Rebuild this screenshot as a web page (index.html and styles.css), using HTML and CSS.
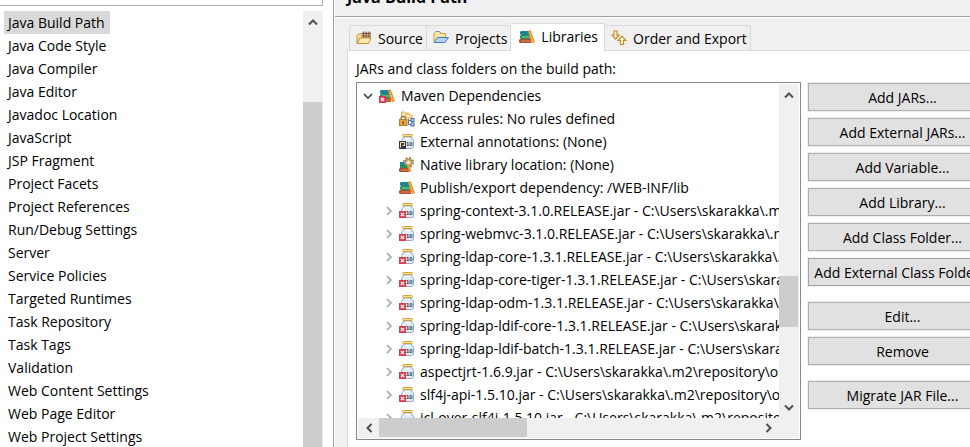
FILE: index.html
```
<!DOCTYPE html>
<html lang="en">
<head>
    <meta charset="UTF-8">
    <meta name="viewport" content="width=device-width, initial-scale=1.0">
    <title>Java Build Path</title>
    <link rel="stylesheet" href="styles.css">
</head>
<body>
    <!-- Icon definitions -->
    <svg class="defs" aria-hidden="true">
        <symbol id="up" viewBox="0 0 10 10"><path d="M1 7.5 L5 3.5 L9 7.5" fill="none" stroke="#505050" stroke-width="2"/></symbol>
        <symbol id="down" viewBox="0 0 10 10"><path d="M1 2.5 L5 6.5 L9 2.5" fill="none" stroke="#505050" stroke-width="2"/></symbol>
        <symbol id="left" viewBox="0 0 10 10"><path d="M7.5 1 L3.5 5 L7.5 9" fill="none" stroke="#505050" stroke-width="2"/></symbol>
        <symbol id="right" viewBox="0 0 10 10"><path d="M2.5 1 L6.5 5 L2.5 9" fill="none" stroke="#505050" stroke-width="2"/></symbol>
        <symbol id="open" viewBox="0 0 10 10"><path d="M1 3 L5 7 L9 3" fill="none" stroke="#404040" stroke-width="1.6"/></symbol>
        <symbol id="closed" viewBox="0 0 10 10"><path d="M3 1 L7 5 L3 9" fill="none" stroke="#a6a6a6" stroke-width="1.6"/></symbol>
        <symbol id="error" viewBox="0 0 7 7">
            <rect width="7" height="7" fill="#d9394d"/>
            <path d="M1.8 1.8 L5.2 5.2 M5.2 1.8 L1.8 5.2" stroke="#fff" stroke-width="1.2"/>
        </symbol>
        <symbol id="books" viewBox="0 0 16 16">
            <path d="M1 3 l1 -1 h8 v4 h-8 l-1 -1z" fill="#1c8793"/>
            <path d="M2 6 h9 v4 h-9 l-1 -1 v-2z" fill="#2c8c5c"/>
            <path d="M3 8 h8" stroke="#8fd0a5" stroke-width="1"/>
            <path d="M1 10 h11 v4 h-11 l-1 -1 v-2z" fill="#b04f2b"/>
            <path d="M2 12 h10" stroke="#d99069" stroke-width="1"/>
            <path d="M9 2.5 L11.5 1 L16 13 L13 14.2z" fill="#e68f27"/>
            <path d="M10.5 3 L14.3 13" stroke="#f7bb59" stroke-width="1"/>
        </symbol>
        <symbol id="books-error" viewBox="0 0 16 16">
            <use href="#books"/>
            <use href="#error" x="0" y="8" width="7" height="7"/>
        </symbol>
        <symbol id="bottle" viewBox="0 0 16 16">
            <path d="M5 3 h7 l2.5 3.5 v6 q0 2 -2 2 h-8 q-2 0 -2 -2 v-6z" fill="#dfebf8" stroke="#93a6c2" stroke-width="1"/>
            <path d="M4.5 6.5 v2 M6 4.5 h5" stroke="#fff" stroke-width="1.4"/>
            <rect x="3.5" y=".5" width="10" height="2" rx="1" fill="#fae596" stroke="#cfa43a" stroke-width="1"/>
            <text x="7" y="11.5" class="bits">10</text>
        </symbol>
        <symbol id="jar" viewBox="0 0 16 16">
            <use href="#bottle"/>
            <use href="#error" x="0" y="8" width="7" height="7"/>
        </symbol>
        <symbol id="annotations" viewBox="0 0 16 16">
            <use href="#bottle"/>
            <rect x="0" y="7" width="7" height="8" fill="#35384a"/>
            <path d="M1.5 13.5 v-5 h4 v3 h-2" fill="none" stroke="#f5e6b0" stroke-width="1"/>
        </symbol>
        <symbol id="rules" viewBox="0 0 16 16">
            <path d="M2.5 1 h3 l1 1 h3 v4 h-7z" fill="#fbe3a0" stroke="#dcae55" stroke-width="1"/>
            <path d="M7 3 h3 l1 1 h2 v3 h-6z" fill="#fff0bd" stroke="#dcae55" stroke-width="1"/>
            <path d="M9.5 8 v5.5 h3 M9.5 9.5 h3" fill="none" stroke="#5274ad" stroke-width="1"/>
            <rect x="12" y="7.5" width="3" height="3" fill="#c9dbf4" stroke="#4469a8"/>
            <rect x="12" y="12" width="3" height="3" fill="#c9dbf4" stroke="#4469a8"/>
            <path d="M2 9 v-1.5 a2.2 2.2 0 0 1 4.4 0 v1.5" fill="none" stroke="#8d7449" stroke-width="1.3"/>
            <rect x=".5" y="8.5" width="7.5" height="6" fill="#e2a63e" stroke="#b67b28"/>
            <path d="M4.2 10.5 v2.5" stroke="#71440f" stroke-width="1.3"/>
        </symbol>
        <symbol id="native" viewBox="0 0 16 16">
            <circle cx="9.5" cy="5.5" r="4.7" fill="none" stroke="#9a7b48" stroke-width="1.6" stroke-dasharray="2 1.7"/>
            <circle cx="9.5" cy="5.5" r="3.2" fill="#ead9ae" stroke="#b3925a" stroke-width="1.8"/>
            <circle cx="9.5" cy="5.5" r="1.3" fill="#fff"/>
            <path d="M1 5 h4 l1 3 h-5z" fill="#1c8793"/>
            <path d="M1 8 h8 v3 h-8z" fill="#2c8c5c"/>
            <path d="M1 11 h9 v4 h-9 l-1 -1 v-2z" fill="#b04f2b"/>
            <path d="M2 13 h8" stroke="#d99069" stroke-width="1"/>
            <path d="M7.5 8 l2 -1 l3 7 l-2 1z" fill="#ee9a31"/>
        </symbol>
        <symbol id="source" viewBox="0 0 16 16">
            <path d="M1 13.5 v-8 l1.5 -1.5 h3 l1.5 1.5 h6 v3" fill="#f9dd95" stroke="#c7922f"/>
            <path d="M6 2 h9 v6 h-9z" fill="#e7c7a0"/>
            <path d="M5.5 3.5 h9.5 M5.5 6 h9.5 M7.5 1.5 v6.5 M10.2 1.5 v6.5 M13 1.5 v6.5" stroke="#735044" stroke-width="1"/>
            <path d="M1 13.5 l2.8 -5.5 h11.4 l-2.8 5.5z" fill="#fce9b1" stroke="#c7922f"/>
        </symbol>
        <symbol id="projects" viewBox="0 0 16 16">
            <path d="M1 12 v-8.5 l2 -2 h3.5 l1.5 2 h4.5 v4" fill="#fae6aa" stroke="#cba04a"/>
            <path d="M2.5 1.5 h4 l1.5 2" fill="none" stroke="#7198c8"/>
            <path d="M1 12.5 l3.5 -5 h11 l-3.5 5z" fill="#b5d3f5" stroke="#4876b9"/>
        </symbol>
        <symbol id="order" viewBox="0 0 16 16">
            <path d="M3 1 h3 v4 h2 l-3.5 4 l-3.5 -4 h2z" fill="#fff5d2" stroke="#bf8d2a" stroke-width="1.2"/>
            <path d="M9.5 14.5 h3 v-4 h2.5 l-4 -4.3 l-4 4.3 h2.5z" fill="#fff5d2" stroke="#bf8d2a" stroke-width="1.2"/>
        </symbol>
    </svg>

    <div class="dialog">
        <!-- Property pages -->
        <nav class="sidebar">
            <input type="text" class="filter" aria-label="Filter">
            <div class="page-area">
                <ul class="page-list">
                    <li><a href="#" class="selected">Java Build Path</a></li>
                    <li><a href="#">Java Code Style</a></li>
                    <li><a href="#">Java Compiler</a></li>
                    <li><a href="#">Java Editor</a></li>
                    <li><a href="#">Javadoc Location</a></li>
                    <li><a href="#">JavaScript</a></li>
                    <li><a href="#">JSP Fragment</a></li>
                    <li><a href="#">Project Facets</a></li>
                    <li><a href="#">Project References</a></li>
                    <li><a href="#">Run/Debug Settings</a></li>
                    <li><a href="#">Server</a></li>
                    <li><a href="#">Service Policies</a></li>
                    <li><a href="#">Targeted Runtimes</a></li>
                    <li><a href="#">Task Repository</a></li>
                    <li><a href="#">Task Tags</a></li>
                    <li><a href="#">Validation</a></li>
                    <li><a href="#">Web Content Settings</a></li>
                    <li><a href="#">Web Page Editor</a></li>
                    <li><a href="#">Web Project Settings</a></li>
                </ul>
                <div class="scroll vertical">
                    <button class="arrow" aria-label="Scroll up"><svg><use href="#up"/></svg></button>
                    <div class="track-before"></div>
                    <div class="thumb long"></div>
                </div>
            </div>
        </nav>

        <main class="content">
            <h1>Java Build Path</h1>

            <div class="tabs" role="tablist">
                <button class="tab" role="tab"><svg class="icon"><use href="#source"/></svg>Source</button>
                <button class="tab" role="tab"><svg class="icon"><use href="#projects"/></svg>Projects</button>
                <button class="tab active" role="tab" aria-selected="true"><svg class="icon"><use href="#books"/></svg>Libraries</button>
                <button class="tab" role="tab"><svg class="icon"><use href="#order"/></svg>Order and Export</button>
            </div>

            <div class="panel">
                <p class="caption">JARs and class folders on the build path:</p>
                <div class="columns">
                    <div class="tree">
                        <ul class="rows">
                            <li class="root"><svg class="twisty"><use href="#open"/></svg><svg class="icon"><use href="#books-error"/></svg>Maven Dependencies</li>
                            <li class="leaf"><svg class="icon"><use href="#rules"/></svg>Access rules: No rules defined</li>
                            <li class="leaf"><svg class="icon"><use href="#annotations"/></svg>External annotations: (None)</li>
                            <li class="leaf"><svg class="icon"><use href="#native"/></svg>Native library location: (None)</li>
                            <li class="leaf"><svg class="icon"><use href="#books"/></svg>Publish/export dependency: /WEB-INF/lib</li>
                            <li><svg class="twisty"><use href="#closed"/></svg><svg class="icon"><use href="#jar"/></svg>spring-context-3.1.0.RELEASE.jar - C:\Users\skarakka\.m2</li>
                            <li><svg class="twisty"><use href="#closed"/></svg><svg class="icon"><use href="#jar"/></svg>spring-webmvc-3.1.0.RELEASE.jar - C:\Users\skarakka\.m2</li>
                            <li><svg class="twisty"><use href="#closed"/></svg><svg class="icon"><use href="#jar"/></svg>spring-ldap-core-1.3.1.RELEASE.jar - C:\Users\skarakka\.</li>
                            <li><svg class="twisty"><use href="#closed"/></svg><svg class="icon"><use href="#jar"/></svg>spring-ldap-core-tiger-1.3.1.RELEASE.jar - C:\Users\skara</li>
                            <li><svg class="twisty"><use href="#closed"/></svg><svg class="icon"><use href="#jar"/></svg>spring-ldap-odm-1.3.1.RELEASE.jar - C:\Users\skarakka\</li>
                            <li><svg class="twisty"><use href="#closed"/></svg><svg class="icon"><use href="#jar"/></svg>spring-ldap-ldif-core-1.3.1.RELEASE.jar - C:\Users\skarak</li>
                            <li><svg class="twisty"><use href="#closed"/></svg><svg class="icon"><use href="#jar"/></svg>spring-ldap-ldif-batch-1.3.1.RELEASE.jar - C:\Users\skara</li>
                            <li><svg class="twisty"><use href="#closed"/></svg><svg class="icon"><use href="#jar"/></svg>aspectjrt-1.6.9.jar - C:\Users\skarakka\.m2\repository\or</li>
                            <li><svg class="twisty"><use href="#closed"/></svg><svg class="icon"><use href="#jar"/></svg>slf4j-api-1.5.10.jar - C:\Users\skarakka\.m2\repository\o</li>
                            <li><svg class="twisty"><use href="#closed"/></svg><svg class="icon"><use href="#jar"/></svg>jcl-over-slf4j-1.5.10.jar - C:\Users\skarakka\.m2\reposito</li>
                        </ul>
                        <div class="scroll vertical">
                            <button class="arrow" aria-label="Scroll up"><svg><use href="#up"/></svg></button>
                            <div class="track"></div>
                            <div class="thumb"></div>
                            <div class="track-after"></div>
                            <button class="arrow" aria-label="Scroll down"><svg><use href="#down"/></svg></button>
                        </div>
                        <div class="scroll horizontal">
                            <button class="arrow" aria-label="Scroll left"><svg><use href="#left"/></svg></button>
                            <div class="thumb"></div>
                            <div class="track"></div>
                            <button class="arrow" aria-label="Scroll right"><svg><use href="#right"/></svg></button>
                        </div>
                    </div>

                    <div class="actions">
                        <button>Add JARs...</button>
                        <button>Add External JARs...</button>
                        <button>Add Variable...</button>
                        <button>Add Library...</button>
                        <button>Add Class Folder...</button>
                        <button class="focused">Add External Class Folder...</button>
                        <button class="group">Edit...</button>
                        <button>Remove</button>
                        <button class="group">Migrate JAR File...</button>
                    </div>
                </div>
            </div>
        </main>
    </div>
</body>
</html>
```
FILE: styles.css
```
* {
    box-sizing: border-box;
}

body {
    margin: 0;
    overflow: hidden;
    background-color: #ffffff;
    color: #000000;
    font-family: "Open Sans", "Noto Sans", sans-serif;
    font-size: 14px;
    line-height: 23px;
}

button {
    font: inherit;
    color: inherit;
    white-space: nowrap;
}

ul {
    margin: 0;
    padding: 0;
    list-style: none;
}

.defs {
    display: none;
}

.bits {
    font-family: "Liberation Sans", sans-serif;
    font-size: 6px;
    font-weight: bold;
    fill: #26364f;
}

.dialog {
    display: flex;
    height: 100vh;
}

/* Sidebar */
.sidebar {
    display: flex;
    flex-direction: column;
    flex: 0 0 334px;
    padding-right: 10px;
    border-right: 1px solid #a0a0a0;
}

.filter {
    flex: none;
    height: 28px;
    margin: -22px 0 5px -1px;
    border: 1px solid #abadb3;
    font: inherit;
}

.page-area {
    display: flex;
    flex: 1;
    min-height: 0;
}

.page-list {
    flex: 1;
    padding-left: 4px;
}

.page-list a {
    display: inline-block;
    height: 23px;
    padding: 0 5px 0 4px;
    color: inherit;
    text-decoration: none;
    vertical-align: top;
}

.page-list .selected {
    background-color: #d9d9d9;
}

/* Scroll bars */
.scroll {
    display: flex;
    background-color: #f0f0f0;
}

.vertical {
    flex-direction: column;
    width: 20px;
    padding-right: 1px;
}

.horizontal {
    height: 20px;
    padding-bottom: 1px;
}

.arrow {
    display: flex;
    flex: 0 0 21px;
    align-items: center;
    justify-content: center;
    padding: 0;
    border: none;
    background: none;
}

.arrow svg,
.twisty {
    width: 10px;
    height: 10px;
}

.thumb {
    flex: 0 0 51px;
    background-color: #cdcdcd;
}

.thumb.long {
    flex: 1;
}

.track-before {
    flex: 0 0 70px;
}

.track {
    flex: 170;
}

.track-after {
    flex: 70;
}

.horizontal .thumb {
    flex-basis: 148px;
}

/* Content */
.content {
    display: flex;
    flex-direction: column;
    flex: 1;
    min-width: 0;
    border-left: 1px solid #ffffff;
    background-color: #f0f0f0;
}

h1 {
    height: 29px;
    margin: -12px 0 0;
    padding-left: 12px;
    border-bottom: 1px solid #a0a0a0;
    box-shadow: 0 1px 0 #ffffff;
    font-size: 16px;
    line-height: 18px;
}

.tabs {
    display: flex;
    align-items: flex-end;
    height: 33px;
    padding-left: 14px;
}

.tab {
    display: flex;
    align-items: center;
    gap: 6px;
    height: 25px;
    padding: 0 3px 0 6px;
    border: 1px solid #d9d9d9;
    border-bottom: none;
    border-left: none;
    background-color: #f0f0f0;
}

.tab:first-child {
    border-left: 1px solid #d9d9d9;
}

.tab.active {
    height: 28px;
    margin-bottom: -1px;
    padding: 0 6px 2px 8px;
    z-index: 1;
    background-color: #ffffff;
}

.icon {
    flex: none;
    width: 16px;
    height: 16px;
}

.panel {
    display: flex;
    flex-direction: column;
    flex: 1;
    min-height: 0;
    margin-left: 12px;
    padding: 6px 0 7px 8px;
    border: 1px solid #d9d9d9;
    border-right: none;
    border-bottom: none;
    background-color: #ffffff;
}

.caption {
    margin: 0 0 2px;
}

.columns {
    display: flex;
    flex: 1;
    min-height: 0;
    gap: 7px;
}

/* Library tree */
.tree {
    display: grid;
    flex: 1;
    min-width: 0;
    grid-template-columns: minmax(0, 1fr) 20px;
    grid-template-rows: minmax(0, 1fr) 20px;
    padding: 1px;
    border: 1px solid #828790;
}

.rows {
    overflow: hidden;
}

.rows li {
    display: flex;
    align-items: center;
    gap: 5px;
    height: 23px;
    padding-left: 26px;
    white-space: pre;
}

.rows .root {
    padding-left: 5px;
    gap: 6px;
}

.rows .leaf {
    padding-left: 41px;
}

.twisty {
    flex: none;
}

.tree .horizontal {
    grid-column: 1 / 3;
    padding-right: 20px;
}

/* Action buttons, the column runs past the right edge */
.actions {
    display: flex;
    flex-direction: column;
    flex: 0 0 189px;
    gap: 7px;
    margin-right: -27px;
    padding-top: 1px;
}

.actions button {
    height: 28px;
    padding: 0;
    border: 1px solid #adadad;
    background-color: #e1e1e1;
    box-shadow: 0 0 0 1px #f0f0f0;
}

.actions .group {
    margin-top: 9px;
}

.actions .focused {
    border-color: #9aa5ae;
}
```
